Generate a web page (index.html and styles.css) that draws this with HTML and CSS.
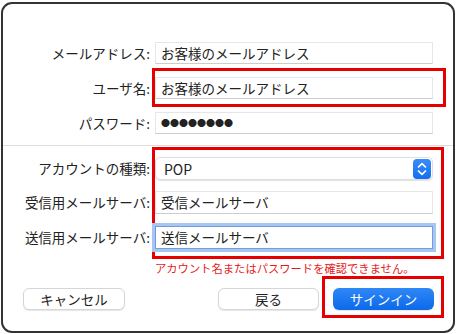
FILE: index.html
```html
<!DOCTYPE html>
<html lang="ja">
<head>
    <meta charset="UTF-8">
    <meta name="viewport" content="width=device-width, initial-scale=1.0">
    <title>アカウント設定</title>
    <link rel="stylesheet" href="styles.css">
</head>
<body>
    <div class="dialog">
        <div class="row">
            <div class="label">メールアドレス:</div>
            <div class="field">お客様のメールアドレス</div>
        </div>
        <div class="row row-user">
            <div class="label">ユーザ名:</div>
            <div class="mark mark-user">
                <div class="field">お客様のメールアドレス</div>
            </div>
        </div>
        <div class="row row-pass">
            <div class="label">パスワード:</div>
            <div class="field field-pass">●●●●●●●●</div>
        </div>
        <div class="sep"></div>
        <div class="server">
            <div class="labels">
                <div class="label">アカウントの種類:</div>
                <div class="label">受信用メールサーバ:</div>
                <div class="label">送信用メールサーバ:</div>
            </div>
            <div class="mark mark-server">
                <div class="select">
                    <span>POP</span>
                    <span class="stepper">
                        <svg width="18" height="20" viewBox="0 0 18 20">
                            <path d="M5.5 8 L9 4.6 L12.5 8" fill="none" stroke="#fff" stroke-width="1.7" stroke-linecap="round" stroke-linejoin="round"/>
                            <path d="M5.5 12 L9 15.4 L12.5 12" fill="none" stroke="#fff" stroke-width="1.7" stroke-linecap="round" stroke-linejoin="round"/>
                        </svg>
                    </span>
                </div>
                <div class="field">受信メールサーバ</div>
                <div class="field field-focus">送信メールサーバ</div>
            </div>
        </div>
        <p class="error">アカウント名またはパスワードを確認できません。</p>
        <div class="actions">
            <button class="btn btn-cancel">キャンセル</button>
            <button class="btn btn-back">戻る</button>
            <div class="mark mark-signin">
                <button class="btn btn-primary">サインイン</button>
            </div>
        </div>
    </div>
</body>
</html>
```

FILE: styles.css
```css
* {
    box-sizing: border-box;
}
body {
    margin: 0;
    font-family: "Noto Sans CJK JP", "Noto Sans", sans-serif;
    font-size: 13.5px;
    color: #222;
    background-color: #fff;
}
.dialog {
    margin: 2px 0 0 1px;
    width: 454px;
    height: 331px;
    padding-top: 38px;
    border: 2px solid #333;
    border-radius: 11px;
    background-color: #fff;
}
.row {
    display: flex;
    align-items: center;
}
.row-user {
    margin-top: 4px;
}
.row-pass {
    margin-top: 5px;
}
.label {
    width: 147px;
    flex: none;
    text-align: right;
    white-space: nowrap;
}
.field {
    margin-left: 5px;
    width: 278px;
    height: 22px;
    line-height: 20px;
    padding-left: 5px;
    border: 1px solid #e6e6e6;
    border-bottom-color: #cdcdcd;
    background-color: #fff;
    white-space: nowrap;
}
.field-pass {
    font-size: 9px;
    letter-spacing: 0;
}
.mark {
    border: 3px solid #e60000;
}
.mark .field {
    margin-left: 0;
}
.mark-user {
    margin-left: 2px;
    padding: 6px 10px 5px 0;
}
.sep {
    margin-top: 11px;
    height: 1px;
    background-color: #dcdcdc;
}
.server {
    display: flex;
    margin-top: 1px;
}
.labels {
    width: 147px;
    flex: none;
    padding-top: 10px;
}
.labels .label {
    height: 23px;
    line-height: 23px;
}
.labels .label + .label {
    margin-top: 11px;
}
.labels .label:last-child {
    margin-top: 12px;
}
.mark-server {
    margin-left: 2px;
    width: 292px;
    padding: 7px 0 0 0;
    height: 112px;
}
.select {
    display: flex;
    align-items: center;
    justify-content: space-between;
    width: 278px;
    height: 23px;
    padding: 0 1px 0 8px;
    border: 1px solid #dedede;
    border-radius: 5px;
    box-shadow: 0 1px 1px rgba(0,0,0,0.12);
    font-size: 14px;
}
.stepper {
    display: flex;
    width: 18px;
    height: 20px;
    border-radius: 4px;
    background: linear-gradient(#3b8cf8, #146fee);
}
.mark-server .field {
    height: 23px;
    line-height: 21px;
    margin-top: 11px;
}
.mark-server .field-focus {
    margin-top: 12px;
    border: 1px solid #6f9de0;
    box-shadow: 0 0 0 3px #a9c6f2;
}
.error {
    margin: 2px 0 0 0;
    padding-left: 152px;
    font-size: 11.3px;
    line-height: 14px;
    color: #e41b1b;
    white-space: nowrap;
}
.actions {
    display: flex;
    align-items: flex-end;
    margin-top: 1px;
    padding: 0 9px 0 20px;
}
.btn {
    width: 102px;
    height: 22px;
    padding: 0;
    font-family: inherit;
    font-size: 13.5px;
    color: #222;
    background-color: #fff;
    border: 1px solid #d6d6d6;
    border-radius: 6px;
    box-shadow: 0 1px 1px rgba(0,0,0,0.1);
}
.btn-cancel,
.btn-back {
    margin-bottom: 8px;
}
.btn-back {
    width: 101px;
    margin-left: auto;
    margin-right: 3px;
}
.mark-signin {
    padding: 9px 7px 5px 8px;
}
.btn-primary {
    width: 101px;
    color: #fff;
    border: none;
    background: linear-gradient(#2f88f8, #0c69e8);
}
```
